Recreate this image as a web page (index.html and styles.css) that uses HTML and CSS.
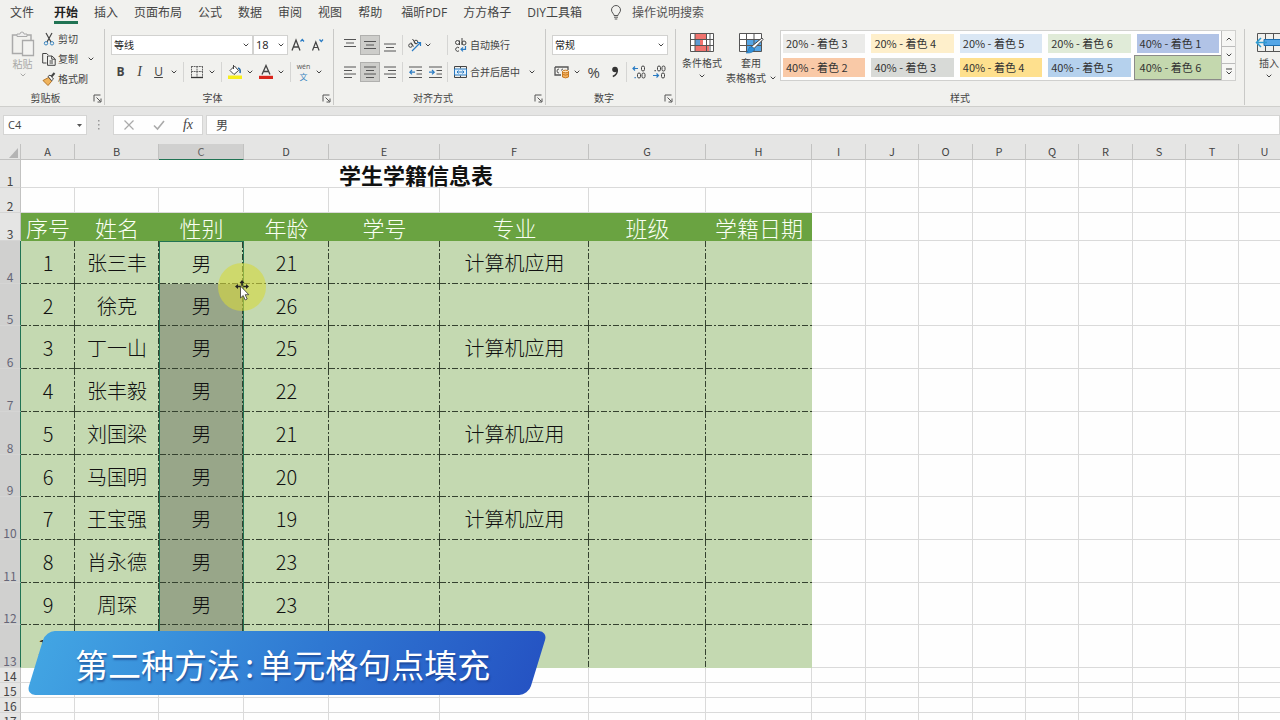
FILE: index.html
```html
<!DOCTYPE html>
<html lang="zh-CN">
<head>
<meta charset="utf-8">
<title>学生学籍信息表</title>
<link rel="stylesheet" href="styles.css">
</head>
<body>
<svg class="defs" aria-hidden="true">
  <symbol id="chev" viewBox="0 0 6 4"><path d="M.7 .7 3 3 5.300 .7" fill="none" stroke="currentColor" stroke-width="1"/></symbol>
  <symbol id="launch" viewBox="0 0 9 9"><path d="M1 7.500V1h6.500M3.500 3.500 7.500 7.500M8 4.500V8H4.500" fill="none" stroke="#555" stroke-width="1"/></symbol>
</svg>

<nav class="tabs" aria-label="功能区">
  <button class="tab file">文件</button>
  <button class="tab active">开始</button>
  <button class="tab">插入</button>
  <button class="tab">页面布局</button>
  <button class="tab">公式</button>
  <button class="tab">数据</button>
  <button class="tab">审阅</button>
  <button class="tab">视图</button>
  <button class="tab">帮助</button>
  <button class="tab addin">福昕PDF</button>
  <button class="tab">方方格子</button>
  <button class="tab">DIY工具箱</button>
  <button class="tab tell">
    <svg width="12" height="15" viewBox="0 0 12 15"><path d="M4 10.500C4 8.500 1.500 7.800 1.500 5a4.500 4.500 0 0 1 9 0c0 2.800-2.500 3.500-2.500 5.500zM4 12.200h4M4.700 14h2.600" fill="none" stroke="#555"/></svg>
    操作说明搜索
  </button>
</nav>

<div class="ribbon">
  <section class="group clipboard">
    <div class="body">
      <button class="big paste">
        <svg width="24" height="26" viewBox="0 0 24 26"><path d="M6 4H1.500v18.500H11M16 4h4v5" fill="none" stroke="#aaa" stroke-width="1.500"/><path d="M6 5.500V3h3a2 2 0 0 1 4 0h3v2.500z" fill="#eee" stroke="#aaa"/><path d="M11.500 9.500h11v15h-11z" fill="#f3f3f1" stroke="#aaa" stroke-width="1.300"/></svg>
        <span>粘贴</span>
        <svg class="chev"><use href="#chev"/></svg>
      </button>
      <div class="stack">
        <button class="line"><svg width="14" height="14" viewBox="0 0 14 14"><path d="M4 1 9 10M10 1 5 10" stroke="#444" stroke-width="1.200"/><circle cx="4" cy="11.300" r="1.700" fill="none" stroke="#3b86c0"/><circle cx="10" cy="11.300" r="1.700" fill="none" stroke="#3b86c0"/></svg>剪切</button>
        <button class="line"><svg width="14" height="14" viewBox="0 0 14 14"><path d="M4.500 11H.7V1.500h4l1.500 1.500M5.500 4h4.500l3.200 3v6.300H5.500zM9.700 4v3.200h3.500M7.500 9h3.500M7.500 11h3.500" fill="none" stroke="#444"/></svg>复制<svg class="chev far"><use href="#chev"/></svg></button>
        <button class="line"><svg width="14" height="14" viewBox="0 0 14 14"><path d="M1 8.500 6.500 5.500l3.200 3.700L6 13.500z" fill="#f0b45c" stroke="#b5762a"/><path d="M6 4.500 8 3l3.500 4-1.800 1.700z" fill="#fff" stroke="#444"/><path d="M9.500 4.500 12.500 1" stroke="#444" stroke-width="2"/></svg>格式刷</button>
      </div>
    </div>
    <footer><span>剪贴板</span><svg class="launch"><use href="#launch"/></svg></footer>
  </section>

  <section class="group font">
    <div class="rows">
      <div class="row">
        <span class="pick name"><select aria-label="字体"><option>等线</option></select><svg class="chev"><use href="#chev"/></svg></span>
        <span class="pick size"><select aria-label="字号"><option>18</option></select><svg class="chev"><use href="#chev"/></svg></span>
        <button class="ico" aria-label="增大字号"><svg width="14" height="14" viewBox="0 0 14 14"><path d="M1 12.500 5 2l4 10.500M2.500 9h5" fill="none" stroke="#444" stroke-width="1.300"/><path d="M9.500 3.500 11.300 1.500 13 3.500" fill="none" stroke="#2b7cc4" stroke-width="1.200"/></svg></button>
        <button class="ico" aria-label="减小字号"><svg width="14" height="14" viewBox="0 0 14 14"><path d="M2.500 12.500 5.800 4l3.300 8.500M3.700 9.500h4.200" fill="none" stroke="#444" stroke-width="1.200"/><path d="M9.500 1.500 11.300 3.500 13 1.500" fill="none" stroke="#2b7cc4" stroke-width="1.200"/></svg></button>
      </div>
      <div class="row">
        <button class="ico bold">B</button>
        <button class="ico italic">I</button>
        <button class="ico under">U</button>
        <button class="drop" aria-label="下划线选项"><svg class="chev"><use href="#chev"/></svg></button>
        <i class="sep wide"></i>
        <button class="ico" aria-label="边框"><svg width="14" height="14" viewBox="0 0 14 14"><path d="M1.500 1v11M12.500 1v11M1 1.500h12M7 1v11M1 6.500h12" fill="none" stroke="#666" stroke-dasharray="2 .6"/><path d="M1 12.500h12" stroke="#333" stroke-width="1.300"/></svg></button>
        <button class="drop" aria-label="边框选项"><svg class="chev"><use href="#chev"/></svg></button>
        <i class="sep wide"></i>
        <button class="ico" aria-label="填充颜色"><svg width="16" height="16" viewBox="0 0 16 16"><path d="M3 6.500 7.500 2l4 4.500-4.500 4zM6.500 1v4" fill="#fff" stroke="#444"/><path d="M11 4c2 .5 2.500 2.500 2 5" fill="none" stroke="#2b6ca8" stroke-width="1.600"/><path d="M1 11.500h14V15H1z" fill="#f7ee1c"/></svg></button>
        <button class="drop" aria-label="填充颜色选项"><svg class="chev"><use href="#chev"/></svg></button>
        <button class="ico" aria-label="字体颜色"><svg width="14" height="16" viewBox="0 0 14 16"><path d="M3 10.500 7 1.500l4 9M4.500 7.500h5" fill="none" stroke="#444" stroke-width="1.300"/><path d="M0 11.800h14V15H0z" fill="#d9261c"/></svg></button>
        <button class="drop" aria-label="字体颜色选项"><svg class="chev"><use href="#chev"/></svg></button>
        <i class="sep wide"></i>
        <button class="ico wen"><span>wén</span><b>文</b></button>
        <button class="drop" aria-label="拼音选项"><svg class="chev"><use href="#chev"/></svg></button>
      </div>
    </div>
    <footer><span>字体</span><svg class="launch"><use href="#launch"/></svg></footer>
  </section>

  <section class="group align">
    <div class="rows">
      <div class="row">
        <button class="ico" aria-label="顶端对齐"><svg width="12" height="14" viewBox="0 0 12 14"><path d="M0 1.500h12M2 5h8M0 8.500h12" stroke="#555"/></svg></button>
        <button class="ico on" aria-label="垂直居中"><svg width="12" height="14" viewBox="0 0 12 14"><path d="M0 3.500h12M2 7h8M0 10.500h12" stroke="#555"/></svg></button>
        <button class="ico" aria-label="底端对齐"><svg width="12" height="14" viewBox="0 0 12 14"><path d="M0 6h12M2 9.500h8M0 13h12" stroke="#555"/></svg></button>
        <i class="sep"></i>
        <button class="ico" aria-label="方向"><svg width="16" height="16" viewBox="0 0 16 16"><g fill="none" stroke="#444"><circle cx="3.500" cy="8.500" r="1.800"/><path d="M4 5.500 6.500 9.500M5.500 2l3.500 5"/><circle cx="9" cy="5" r="1.800"/></g><path d="M5 14 13.500 5.500M13.500 9V5.500H10" fill="none" stroke="#2b7cc4" stroke-width="1.200"/></svg></button>
        <button class="drop slot" aria-label="方向选项"><svg class="chev"><use href="#chev"/></svg></button>
        <i class="sep"></i>
        <button class="line wrap"><svg width="13" height="16" viewBox="0 0 13 16"><g fill="none" stroke="#444"><circle cx="3.500" cy="5.500" r="2"/><path d="M5.500 3.500v4.500M8 1v7M5 10.800a2 2 0 1 0 0 3"/><circle cx="10" cy="6" r="2"/></g><path d="M11.500 9v3.300H7M9 10.300 7 12.300l2 2" fill="none" stroke="#2b7cc4" stroke-width="1.200"/></svg>自动换行</button>
      </div>
      <div class="row">
        <button class="ico" aria-label="左对齐"><svg width="12" height="14" viewBox="0 0 12 14"><path d="M0 2h12M0 5.500h8M0 9h12M0 12.500h8" stroke="#555"/></svg></button>
        <button class="ico on" aria-label="居中"><svg width="12" height="14" viewBox="0 0 12 14"><path d="M0 2h12M2 5.500h8M0 9h12M2 12.500h8" stroke="#555"/></svg></button>
        <button class="ico" aria-label="右对齐"><svg width="12" height="14" viewBox="0 0 12 14"><path d="M0 2h12M4 5.500h8M0 9h12M4 12.500h8" stroke="#555"/></svg></button>
        <i class="sep"></i>
        <button class="ico" aria-label="减少缩进"><svg width="13" height="14" viewBox="0 0 13 14"><path d="M0 2h13M7.500 5.500H13M7.500 9H13M0 12.500h13" stroke="#555"/><path d="M6 7.200H1M3 5 .8 7.200 3 9.400" fill="none" stroke="#2b7cc4" stroke-width="1.200"/></svg></button>
        <button class="ico" aria-label="增加缩进"><svg width="13" height="14" viewBox="0 0 13 14"><path d="M0 2h13M7.500 5.500H13M7.500 9H13M0 12.500h13" stroke="#555"/><path d="M0 7.200h5M3 5l2.200 2.200L3 9.400" fill="none" stroke="#2b7cc4" stroke-width="1.200"/></svg></button>
        <i class="sep"></i>
        <button class="line wrap"><svg width="13" height="14" viewBox="0 0 13 14"><path d="M.5 1.500h12v11H.5zM6.500 1.500v2M6.500 10.500v2" fill="none" stroke="#444"/><path d="M.5 4h12v6H.5z" fill="#e4f1fb" stroke="#2b7cc4"/><path d="M3 7h7M4.500 5.500 3 7l1.500 1.500M8.500 5.500 10 7 8.500 8.500" fill="none" stroke="#2b7cc4"/></svg>合并后居中<svg class="chev far"><use href="#chev"/></svg></button>
      </div>
    </div>
    <footer><span>对齐方式</span><svg class="launch"><use href="#launch"/></svg></footer>
  </section>

  <section class="group number">
    <div class="rows">
      <div class="row">
        <span class="pick format"><select aria-label="数字格式"><option>常规</option></select><svg class="chev"><use href="#chev"/></svg></span>
      </div>
      <div class="row">
        <button class="ico" aria-label="会计数字格式"><svg width="16" height="14" viewBox="0 0 16 14"><path d="M1 2h13v3M1 2v8h6" fill="none" stroke="#555" stroke-width="1.300"/><path d="M5 4Q3 4 3 6t2 2M9 4Q7.500 4 7.500 5.500" fill="none" stroke="#555"/><path d="M8.500 6.500v5.500q3 1.800 6 0V6.500z" fill="#f4b261" stroke="#c97a20"/><ellipse cx="11.500" cy="6.500" rx="3" ry="1.300" fill="#fde0b5" stroke="#c97a20"/><path d="M8.500 9.300q3 1.700 6 0" fill="none" stroke="#c97a20"/></svg></button>
        <button class="drop" aria-label="会计数字格式选项"><svg class="chev"><use href="#chev"/></svg></button>
        <button class="ico percent">%</button>
        <button class="ico" aria-label="千位分隔样式"><svg width="8" height="12" viewBox="0 0 8 12"><circle cx="4" cy="3.500" r="2.800" fill="#333"/><path d="M6.300 3.500C6.500 7 4.500 9.500 1.800 10.500" fill="none" stroke="#333" stroke-width="1.500"/></svg></button>
        <i class="sep"></i>
        <button class="ico" aria-label="增加小数位数"><svg width="14" height="14" viewBox="0 0 14 14"><path d="M1 3.500h5M3 1.500 1 3.500l2 2" fill="none" stroke="#2b7cc4" stroke-width="1.200"/><g fill="none" stroke="#444"><rect x="9.500" y="1" width="3" height="5" rx="1.500"/><rect x="5.500" y="8" width="3" height="5" rx="1.500"/><rect x="10" y="8" width="3" height="5" rx="1.500"/></g><path d="M2.500 12h1.300v1.300H2.500z" fill="#2b7cc4"/></svg></button>
        <button class="ico" aria-label="减少小数位数"><svg width="14" height="14" viewBox="0 0 14 14"><path d="M1 10.500h5.500M4.500 8.500l2 2-2 2" fill="none" stroke="#2b7cc4" stroke-width="1.200"/><g fill="none" stroke="#444"><rect x="5.500" y="1" width="3" height="5" rx="1.500"/><rect x="10" y="1" width="3" height="5" rx="1.500"/><rect x="9.500" y="8" width="3" height="5" rx="1.500"/></g><path d="M2.500 5h1.300v1.300H2.500z" fill="#444"/></svg></button>
      </div>
    </div>
    <footer><span>数字</span><svg class="launch"><use href="#launch"/></svg></footer>
  </section>

  <section class="group styles">
    <div class="body">
      <button class="big">
        <svg width="26" height="22" viewBox="0 0 26 22"><path d="M1.500 1.500h23v18h-23z" fill="#fff"/><path d="M6 2h11v5.500H6zM6 13.500h14v6H6z" fill="#f0736e"/><path d="M6 8h5v5H6z" fill="#5d9bd5"/><path d="M11 8h3v5h-3z" fill="#f0736e"/><path d="M1.500 1.500h23v18h-23zM1.500 7.500h23M1.500 13.500h23M6 1.500v18M17.500 1.500v18M21 1.500v18" fill="none" stroke="#555"/></svg>
        <span>条件格式</span>
        <svg class="chev"><use href="#chev"/></svg>
      </button>
      <button class="big">
        <svg width="26" height="22" viewBox="0 0 26 22"><path d="M1.500 1.500h22v18h-22z" fill="#fff"/><path d="M9 7.500h14.500v12H9z" fill="#55a6e6"/><path d="M1.500 1.500h22v18h-22zM1.500 7.500h22M1.500 13.500h22M8.500 1.500v18M16 1.500v18" fill="none" stroke="#555"/><path d="M25 7.500 16 16.500l-2.500-2L24 6z" fill="#fff" stroke="#444"/><path d="M8 21q2-1 2.500-4t4-2l2 2q-1 4.500-8.500 4z" fill="#2f8fd8" stroke="#1d6fb0" stroke-width=".6"/></svg>
        <span>套用</span>
        <span class="inline">表格格式<svg class="chev"><use href="#chev"/></svg></span>
      </button>
      <div class="gallery">
        <div class="swatches">
          <button class="sw g3">20% - 着色 3</button>
          <button class="sw y2">20% - 着色 4</button>
          <button class="sw b2">20% - 着色 5</button>
          <button class="sw n2">20% - 着色 6</button>
          <button class="sw i4">40% - 着色 1</button>
          <button class="sw o4">40% - 着色 2</button>
          <button class="sw g4">40% - 着色 3</button>
          <button class="sw y4">40% - 着色 4</button>
          <button class="sw b4">40% - 着色 5</button>
          <button class="sw n4 chosen">40% - 着色 6</button>
        </div>
        <div class="scroll">
          <button aria-label="上一行"><svg class="chev up"><use href="#chev"/></svg></button>
          <button aria-label="下一行"><svg class="chev"><use href="#chev"/></svg></button>
          <button aria-label="其他"><svg width="8" height="8" viewBox="0 0 8 8"><path d="M1 1h6M1.500 3.500 4 6l2.500-2.500" fill="none" stroke="#444"/></svg></button>
        </div>
      </div>
    </div>
    <footer><span>样式</span></footer>
  </section>

  <section class="group cells">
    <div class="body">
      <button class="big">
        <svg width="28" height="22" viewBox="0 0 28 22"><path d="M2.500 1.500H28M2.500 19.500H28M2.500 1.500v18M10.500 1.500v18M18.500 1.500v18M26.500 1.500v18" stroke="#555" fill="none"/><path d="M9 7.500h19v6H9z" fill="#55a6e6" stroke="#1d6fb0"/><path d="M12 10.500H1.500M6 6l-4.500 4.500L6 15" fill="none" stroke="#2f9bd0" stroke-width="1.500"/></svg>
        <span>插入</span>
        <svg class="chev"><use href="#chev"/></svg>
      </button>
    </div>
  </section>
</div>

<div class="formula">
  <div class="namebox">
    <input aria-label="名称框" value="C4">
    <svg width="5" height="3" viewBox="0 0 5 3"><path d="M0 0h5L2.500 3z" fill="#555"/></svg>
  </div>
  <svg width="4" height="12" viewBox="0 0 4 12"><path d="M1 1h1.500v1.500H1zM1 5h1.500v1.500H1zM1 9h1.500v1.500H1z" fill="#999"/></svg>
  <div class="fx">
    <button aria-label="取消"><svg width="12" height="12" viewBox="0 0 12 12"><path d="M1.500 1.500l9 9M10.500 1.500l-9 9" stroke="#aaa" stroke-width="1.200"/></svg></button>
    <button aria-label="输入"><svg width="12" height="12" viewBox="0 0 12 12"><path d="M1 6.500 4.500 10 11 2" fill="none" stroke="#aaa" stroke-width="1.600"/></svg></button>
    <button class="fn">fx</button>
  </div>
  <input class="entry" aria-label="编辑栏" value="男">
</div>

<main class="sheet">
  <table>
    <colgroup id="cols"></colgroup>
    <thead><tr id="letters"><th class="corner"><svg width="9" height="10" viewBox="0 0 9 10"><path d="M9 0v10H0z" fill="#b4b4b4"/></svg></th></tr></thead>
    <tbody id="grid"></tbody>
  </table>
</main>

<div class="halo"></div>
<svg class="pointer" width="18" height="22" viewBox="0 0 18 22"><path d="M7 0 9.500 3H7.800v2.700H6.200V3H4.500zM0 6.500 3 4v1.700h2.700v1.600H3V9zM14 6.500 11 4v1.700H8.300v1.600H11V9zM7 12 4.800 9.500h4.400z" fill="#222"/><path d="M5.500 6v12l2.700-2.500 2 4.500 2-1-2-4.300h3.600z" fill="#fff" stroke="#333" stroke-width=".8"/></svg>

<div class="banner"><p>第二种方法<span>:</span>单元格句点填充</p></div>
<script src="script.js"></script>
</body>
</html>
```

FILE: styles.css
```css
* { box-sizing: border-box; }
body {
  margin: 0;
  height: 100vh;
  position: relative;
  display: flex;
  flex-direction: column;
  overflow: hidden;
  background: #fefefe;
  color: #444;
  font: 10px/12px "Open Sans", "Noto Sans CJK SC", sans-serif;
}
button, input, select { font: inherit; color: inherit; border: 0; padding: 0; margin: 0; background: none; }
svg { flex: none; display: block; }
.defs { position: absolute; width: 0; height: 0; }
.chev { width: 6px; height: 4px; }
.chev.up { transform: rotate(180deg); }

.tabs {
  display: flex;
  gap: 16px;
  padding: 4px 10px 0;
  height: 28px;
  background: #f1f1ee;
  font-size: 12px;
  line-height: 17px;
  white-space: nowrap;
}
.tab { height: 20px; border-bottom: 3px solid transparent; flex: none; }
.tab.file { margin-right: 4px; }
.tab.addin { margin-left: 3px; }
.tab.active { font-weight: 700; color: #222; border-color: #217353; }
.tab.tell { display: flex; align-items: center; gap: 10px; margin-left: 12px; color: #555; }

.ribbon {
  display: flex;
  height: 79px;
  padding-top: 1px;
  background: #f1f1ee;
  border-bottom: 1px solid #cfcfcc;
  overflow: hidden;
}
.group {
  flex: none;
  display: flex;
  flex-direction: column;
  justify-content: space-between;
  margin-bottom: 1px;
  padding: 0 6px;
  border-right: 1px solid #c9c9c7;
}
.clipboard { width: 105px; }
.font { width: 229px; }
.align { width: 212px; }
.number { width: 130px; }
.styles { flex: 1; }
.cells { width: 35px; border: 0; }
.body { display: flex; }
.group footer { display: flex; align-items: center; height: 14px; }
.group footer span { flex: 1; text-align: center; }
.launch { width: 9px; height: 9px; margin-right: -4px; }
.font footer, .align footer, .number footer { margin-left: -8px; }
.clipboard footer { margin-left: -8px; }

.rows { display: flex; flex-direction: column; gap: 7px; padding-top: 6px; }
.row { display: flex; height: 20px; align-items: center; }
.stack { display: flex; flex-direction: column; }
.stack .line { height: 20px; }
.line { display: flex; align-items: center; gap: 3px; padding-left: 2px; white-space: nowrap; }
.line.wrap { padding-left: 4px; }
.far { margin-left: 6px; }
.ico { width: 20px; height: 20px; display: flex; align-items: center; justify-content: center; flex: none; }
.font .ico { width: 19px; }
.ico.on { background: #cdcdca; border: 1px solid #b0b0ae; }
.drop { width: 12px; height: 20px; display: flex; align-items: center; justify-content: center; }
.drop.slot { width: 20px; justify-content: flex-start; }
.sep { width: 5px; height: 20px; background: linear-gradient(#d5d5d3, #d5d5d3) center / 1px 100% no-repeat; }
.sep.wide { width: 7px; }
.bold { font-size: 12px; font-weight: 700; }
.italic { font: italic 14px "Liberation Serif", serif; }
.under { font-size: 12px; text-decoration: underline; }
.percent { font-size: 15px; width: 22px; }
.wen { flex-direction: column; font-size: 7px; line-height: 9px; color: #555; }
.wen b { font-size: 8px; line-height: 11px; font-weight: 400; color: #3b86c0; }

.pick { display: grid; grid-template-columns: 1fr 12px; height: 20px; align-items: center; background: #fff; border: 1px solid #d2d2d0; }
.pick select { grid-area: 1 / 1 / 2 / 3; width: 100%; height: 18px; padding-left: 2px; appearance: none; color: #222; }
.pick .chev { grid-area: 1 / 2; justify-self: center; pointer-events: none; }
.pick.name { width: 142px; }
.pick.size { width: 35px; }
.pick.size select { font-size: 11px; }
.pick.format { width: 116px; }

.big { display: flex; flex-direction: column; align-items: center; gap: 3px; padding-top: 3px; white-space: nowrap; }
.big .chev { margin-top: 2px; }
.big .inline { display: flex; align-items: center; gap: 4px; }
.big .inline .chev { margin: 0; }
.paste { width: 33px; color: #a9a9a7; padding-top: 2px; gap: 1px; }
.clipboard .line { padding-left: 3px; gap: 2px; }
.clipboard .far { margin-left: 8px; }
.styles .body { gap: 4px; }
.cells .body { padding-left: 4px; }

.gallery { flex: 1; display: flex; margin: 1px 2px 0 0; border: 1px solid #d0d0ce; background: #fefefe; align-self: flex-start; }
.swatches { flex: 1; display: grid; grid-template-columns: repeat(5, 1fr); gap: 5px 6px; padding: 3px 2px; }
.sw { height: 19px; padding-left: 3px; text-align: left; font: 11px/19px "Noto Sans CJK SC", sans-serif; color: #333; white-space: nowrap; }
.g3 { background: #ebebe9; } .y2 { background: #feefcb; } .b2 { background: #dae7f4; } .n2 { background: #e0ebd8; } .i4 { background: #b1c3e6; }
.o4 { background: #f9c9a7; } .g4 { background: #d8dad7; } .y4 { background: #fee08e; } .b4 { background: #b5d1ed; } .n4 { background: #c4d8ae; }
.chosen { outline: 2px solid #c4d8ae; box-shadow: 0 0 0 3px #8b8b89; }
.scroll { width: 14px; display: grid; grid-template-rows: repeat(3, 1fr); border-left: 1px solid #bbb; background: #f6f6f4; }
.scroll button { display: flex; align-items: center; justify-content: center; border-bottom: 1px solid #bbb; }
.scroll button:last-child { border-bottom: 0; }

.formula { display: flex; align-items: center; padding: 8px 0 9px 3px; background: #e5e5e4; font-size: 11px; }
.namebox, .fx, .entry { height: 20px; background: #fefefe; border: 1px solid #d5d5d4; }
.namebox { display: flex; align-items: center; width: 84px; margin-right: 10px; padding: 0 4px; font-size: 11px; }
.namebox input { flex: 1; min-width: 0; }
.fx { display: flex; align-items: center; justify-content: space-around; width: 90px; margin: 0 3px 0 12px; }
.fx .fn { font: italic 14px/16px "Liberation Serif", serif; }
.entry { flex: 1; padding-left: 9px; font-size: 12px; }

.sheet { flex: 1; min-height: 0; overflow: hidden; font-family: "Noto Sans CJK SC", sans-serif; }
table { width: 100%; min-width: 1291px; table-layout: fixed; border-collapse: separate; border-spacing: 0; }
th, td { padding: 0; text-align: center; font-weight: 400; white-space: nowrap; }
thead th { height: 16px; background: #e5e5e4; border-right: 1px solid #c2c2c1; border-bottom: 1px solid #c2c2c1; font-size: 11px; line-height: 15px; }
thead th.picked { background: #d0d0cf; border-bottom-color: #217353; color: #666; }
.corner svg { margin: 3px 0 0 9px; }
tbody th { background: #e5e5e4; border-right: 1px solid #c2c2c1; border-bottom: 1px solid #d5d5d4; vertical-align: bottom; font-size: 12px; line-height: 12px; }
tbody th.picked { background: #d0d0cf; color: #667; border-right-color: #217353; }
tbody tr { height: 15px; }
.tall { height: 28px; }
.mid { height: 25px; }
.record { height: 43px; }
.record.short { height: 42px; }
td { border-right: 1px solid #dadada; border-bottom: 1px solid #dadada; }
.title { font-size: 22px; line-height: 26px; font-weight: 700; color: #111; }
.head { background: #6aa341; border: 0; color: #fafff4; font-size: 22px; line-height: 27px; font-weight: 300; }
.cell {
  border: 0;
  color: #111;
  font-size: 20px;
  font-weight: 300;
  line-height: 24px;
  padding-top: 1px;
  background:
    repeating-linear-gradient(90deg, #35422f 0 6px, transparent 6px 8px, #35422f 8px 10px, transparent 10px 12px) left bottom / 100% 1px no-repeat,
    repeating-linear-gradient(#35422f 0 6px, transparent 6px 8px, #35422f 8px 10px, transparent 10px 12px) right top / 1px 100% no-repeat,
    #c4d9b1;
}
.cell.edge { background-size: 100% 1px, 0 0; }
.record.last .cell { background-size: 0 0, 1px 100%; }
.record.last .cell.edge { background-size: 0 0; }
.cell.sel { background-color: #98a689; border-right: 1px solid #217353; border-left: 1px solid #217353; }
.cell.start { background-color: #c4d9b1; border-top: 1px solid #217353; }

.halo { position: absolute; left: 218px; top: 263px; width: 48px; height: 48px; border-radius: 50%; background: rgba(214, 217, 62, .6); }
.pointer { position: absolute; left: 235px; top: 280px; }

.banner { position: absolute; left: 36px; top: 631px; height: 64px; width: 502px; padding-left: 39px; }
.banner::before {
  content: "";
  position: absolute;
  inset: 0;
  transform: skewX(-17deg);
  border-radius: 9px;
  background: linear-gradient(100deg, #42a5e3, #2f78d2 55%, #2553c3);
}
.banner p { position: relative; margin: 0; color: #fff; font: 33px/66px "Noto Sans CJK SC", sans-serif; white-space: nowrap; text-shadow: 1px 2px 2px rgba(20, 50, 120, .6); }
.banner span { margin: 0 5px; }
```

FILE: script.js
```js
const columns = [
  ["A", 54], ["B", 84], ["C", 85], ["D", 85], ["E", 111], ["F", 149], ["G", 117], ["H", 106],
  ["I", 54], ["J", 53], ["O", 54], ["P", 53], ["Q", 53], ["R", 54], ["S", 53], ["T", 53], ["U", 0]
];
const tableColumns = 8;
const major = "计算机应用";
const headings = ["序号", "姓名", "性别", "年龄", "学号", "专业", "班级", "学籍日期"];
const students = [
  ["1", "张三丰", "男", "21", "", major], ["2", "徐克", "男", "26"], ["3", "丁一山", "男", "25", "", major],
  ["4", "张丰毅", "男", "22"], ["5", "刘国梁", "男", "21", "", major], ["6", "马国明", "男", "20"],
  ["7", "王宝强", "男", "19", "", major], ["8", "肖永德", "男", "23"], ["9", "周琛", "男", "23"], ["10"]
];
const shortRows = [1, 5, 8];

const add = (parent, tag, className, text) => {
  const node = parent.appendChild(document.createElement(tag));
  if (className) node.className = className;
  if (text) node.textContent = text;
  return node;
};
const cols = document.getElementById("cols");
const letters = document.getElementById("letters");
const grid = document.getElementById("grid");

add(cols, "col").style.width = "21px";
for (const [letter, width] of columns) {
  const col = add(cols, "col");
  if (width) col.style.width = width + "px";
  add(letters, "th", letter === "C" ? "picked" : "", letter);
}

let number = 0;
const addRow = (className, picked) => {
  const row = add(grid, "tr", className);
  add(row, "th", picked ? "picked" : "", String(++number));
  return row;
};
const blanks = (row, count) => { for (let i = 0; i < count; i++) add(row, "td"); };
const rest = columns.length - tableColumns;

const title = addRow("tall");
add(title, "td", "title", "学生学籍信息表").colSpan = tableColumns;
blanks(title, rest);
blanks(addRow("mid"), columns.length);

const head = addRow("tall");
headings.forEach(text => add(head, "td", "head", text));
blanks(head, rest);

students.forEach((student, index) => {
  const kind = (shortRows.includes(index) ? " short" : "") + (index === students.length - 1 ? " last" : "");
  const row = addRow("record" + kind, true);
  for (let c = 0; c < tableColumns; c++) {
    let name = "cell";
    if (c === 2) name += index === 0 ? " sel start" : " sel";
    if (c === tableColumns - 1) name += " edge";
    add(row, "td", name, student[c]);
  }
  blanks(row, rest);
});
for (let i = 0; i < 4; i++) blanks(addRow(""), columns.length);
```
